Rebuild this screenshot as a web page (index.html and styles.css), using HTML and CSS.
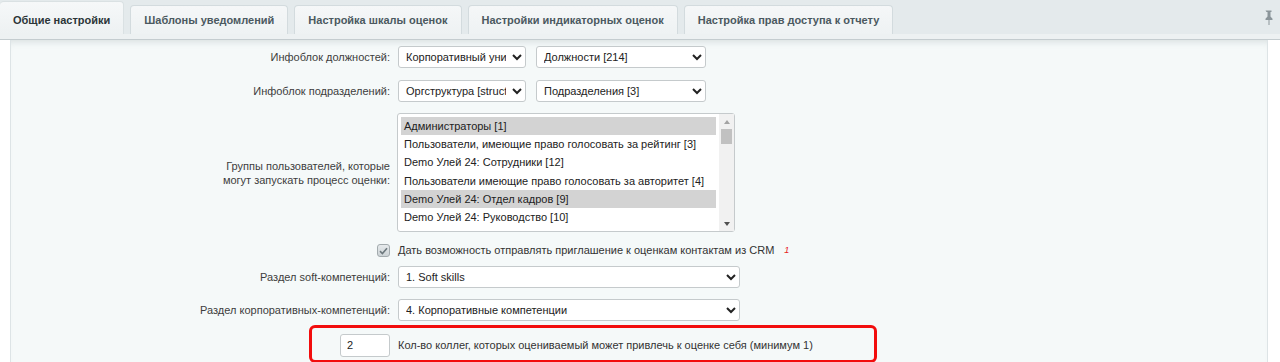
FILE: index.html
```html
<!DOCTYPE html>
<html lang="ru">
<head>
  <meta charset="UTF-8" />
  <title>Настройки модуля</title>
  <link rel="stylesheet" href="styles.css">
</head>
<body>

<div class="tabs">
  <div class="tab tab-active">Общие настройки</div>
  <div class="tab">Шаблоны уведомлений</div>
  <div class="tab">Настройка шкалы оценок</div>
  <div class="tab">Настройки индикаторных оценок</div>
  <div class="tab">Настройка прав доступа к отчету</div>
  <span class="pin">
    <svg width="9" height="15" viewBox="0 0 9 15">
      <path d="M1.5 0.5h6v1.5h-1v4.5l2 2.2v1.3h-3v5h-1v-5h-3v-1.3l2-2.2v-4.5h-1z" fill="#8b959a"/>
    </svg>
  </span>
</div>
<div class="tabs-line"></div>

<div class="content">
  <div class="panel">

    <div class="row row-select">
      <div class="cell-l">Инфоблок должностей:</div>
      <div class="cell-r">
        <select class="sel sel-short">
          <option>Корпоративный университет [corp]</option>
        </select>
        <select class="sel sel-mid">
          <option>Должности [214]</option>
        </select>
      </div>
    </div>

    <div class="row row-select">
      <div class="cell-l">Инфоблок подразделений:</div>
      <div class="cell-r">
        <select class="sel sel-short">
          <option>Оргструктура [structure]</option>
        </select>
        <select class="sel sel-mid">
          <option>Подразделения [3]</option>
        </select>
      </div>
    </div>

    <div class="row row-list">
      <div class="cell-l">Группы пользователей, которые<br>могут запускать процесс оценки:</div>
      <div class="cell-r">
        <div class="listbox">
          <div class="list-pad">
            <div class="list-items">
              <div class="opt opt-selected">Администраторы [1]</div>
              <div class="opt">Пользователи, имеющие право голосовать за рейтинг [3]</div>
              <div class="opt">Demo Улей 24: Сотрудники [12]</div>
              <div class="opt">Пользователи имеющие право голосовать за авторитет [4]</div>
              <div class="opt opt-selected">Demo Улей 24: Отдел кадров [9]</div>
              <div class="opt">Demo Улей 24: Руководство [10]</div>
            </div>
          </div>
          <div class="scrollbar">
            <span class="arrow arrow-up"></span>
            <div class="track"><div class="thumb"></div></div>
            <span class="arrow arrow-down"></span>
          </div>
        </div>
      </div>
    </div>

    <div class="row row-check">
      <div class="cell-l">
        <span class="checkbox">
          <svg width="9" height="8" viewBox="0 0 9 8">
            <path d="M1 4.2l2.4 2.3L8 1.2" fill="none" stroke="#6c787d" stroke-width="1.6"/>
          </svg>
        </span>
      </div>
      <div class="cell-r">Дать возможность отправлять приглашение к оценкам контактам из CRM <sup class="note">1</sup></div>
    </div>

    <div class="row row-select row-soft">
      <div class="cell-l">Раздел soft-компетенций:</div>
      <div class="cell-r">
        <select class="sel sel-long">
          <option>1. Soft skills</option>
        </select>
      </div>
    </div>

    <div class="row row-select row-corp">
      <div class="cell-l">Раздел корпоративных-компетенций:</div>
      <div class="cell-r">
        <select class="sel sel-long">
          <option>4. Корпоративные компетенции</option>
        </select>
      </div>
    </div>

    <div class="highlight">
      <input class="num" type="text" value="2">
      <span>Кол-во коллег, которых оцениваемый может привлечь к оценке себя (минимум 1)</span>
    </div>

  </div>
</div>

</body>
</html>
```

FILE: styles.css
```css
* {
  box-sizing: border-box;
}

body {
  margin: 0;
  background: #fff;
  font-family: "Liberation Sans", Arial, sans-serif;
  font-size: 11px;
  color: #333;
  overflow: hidden;
}

/* tabs */

.tabs {
  display: flex;
  align-items: flex-end;
  gap: 6px;
  height: 34px;
  background: #e4eaec;
}

.tab {
  height: 29px;
  padding: 0 13px;
  line-height: 28px;
  font-weight: bold;
  font-size: 11px;
  color: #4b5960;
  background: linear-gradient(#f5f7f8, #eef2f3);
  border: 1px solid #d3dbde;
  border-bottom: none;
  border-radius: 4px 4px 0 0;
  white-space: nowrap;
}

.tab-active {
  height: 33px;
  line-height: 36px;
  color: #2b3538;
  background: linear-gradient(#f6f8f9, #edf1f2);
  border-left: none;
  border-color: #dae1e3;
}

.pin {
  margin-left: auto;
  margin-right: 7px;
  align-self: center;
  display: flex;
}

.tabs-line {
  height: 6px;
  background: #edf1f2;
  border-bottom: 1px solid #c4cccf;
}

/* content */

.content {
  padding: 0 12px 0 10px;
}

.panel {
  background: #f5f9f9;
  border-left: 1px solid #dde4e6;
  border-right: 1px solid #dde4e6;
  box-shadow: inset 0 7px 7px -5px rgba(90, 110, 118, 0.18);
  min-height: 330px;
}

.row {
  display: flex;
  align-items: center;
}

.cell-l {
  width: 379px;
  flex: none;
  text-align: right;
  color: #3d3d3d;
  line-height: 14px;
}

.cell-r {
  margin-left: 8px;
  display: flex;
  align-items: center;
  gap: 10px;
  color: #333;
}

.row-select {
  padding: 6px 0;
}

.row-soft {
  padding: 4px 0 6px;
}

.row-corp {
  padding: 5px 0 4px;
}

.sel {
  height: 22px;
  padding: 0 3px;
  font-family: "Liberation Sans", Arial, sans-serif;
  font-size: 11px;
  color: #222;
  background: #fff;
  border: 1px solid #c5cacc;
  border-radius: 3px;
}

.sel-short {
  width: 128px;
}

.sel-mid {
  width: 170px;
}

.sel-long {
  width: 342px;
}

/* groups list */

.row-list {
  padding: 5px 0 6px;
}

.row-list .cell-r {
  margin-left: 7px;
}

.listbox {
  display: flex;
  width: 338px;
  height: 119px;
  background: #fff;
  border: 1px solid #c5cacc;
  border-radius: 3px;
  color: #222;
}

.list-pad {
  flex: 1;
  padding: 3px;
}

.list-items {
  height: 110px;
}

.opt {
  height: 18.2px;
  line-height: 18px;
  padding: 0 3px;
  white-space: nowrap;
}

.opt-selected {
  background: #d3d3d3;
}

.scrollbar {
  width: 15px;
  display: flex;
  flex-direction: column;
  align-items: center;
  background: #f1f1f1;
}

.arrow {
  flex: none;
  width: 0;
  height: 0;
  margin: 6px 0 5px;
  border-left: 3.5px solid transparent;
  border-right: 3.5px solid transparent;
}

.arrow-up {
  border-bottom: 4px solid #a3a3a3;
}

.arrow-down {
  border-top: 4px solid #505050;
}

.track {
  flex: 1;
  width: 100%;
  padding: 0 2px;
}

.thumb {
  height: 15px;
  background: #c1c1c1;
}

.row-check {
  height: 24px;
}

.checkbox {
  display: inline-flex;
  align-items: center;
  justify-content: center;
  width: 13px;
  height: 13px;
  vertical-align: middle;
  border: 1px solid #a3abae;
  border-radius: 3px;
  background: linear-gradient(#e6eaec, #ccd3d6);
}

.note {
  color: #e52222;
  font-size: 9px;
  font-style: italic;
  vertical-align: 6px;
  line-height: 0;
}

/* highlighted setting */

.highlight {
  display: flex;
  align-items: center;
  gap: 8px;
  width: 568px;
  height: 38px;
  margin-left: 298px;
  padding: 4px 0 2px 28px;
  border: 3px solid #f20d0d;
  border-radius: 6px;
  color: #333;
}

.num {
  width: 50px;
  height: 23px;
  padding: 0 6px;
  font-family: "Liberation Sans", Arial, sans-serif;
  font-size: 11px;
  color: #222;
  background: #fff;
  border: 1px solid #c5cacc;
  border-radius: 3px;
}
```
